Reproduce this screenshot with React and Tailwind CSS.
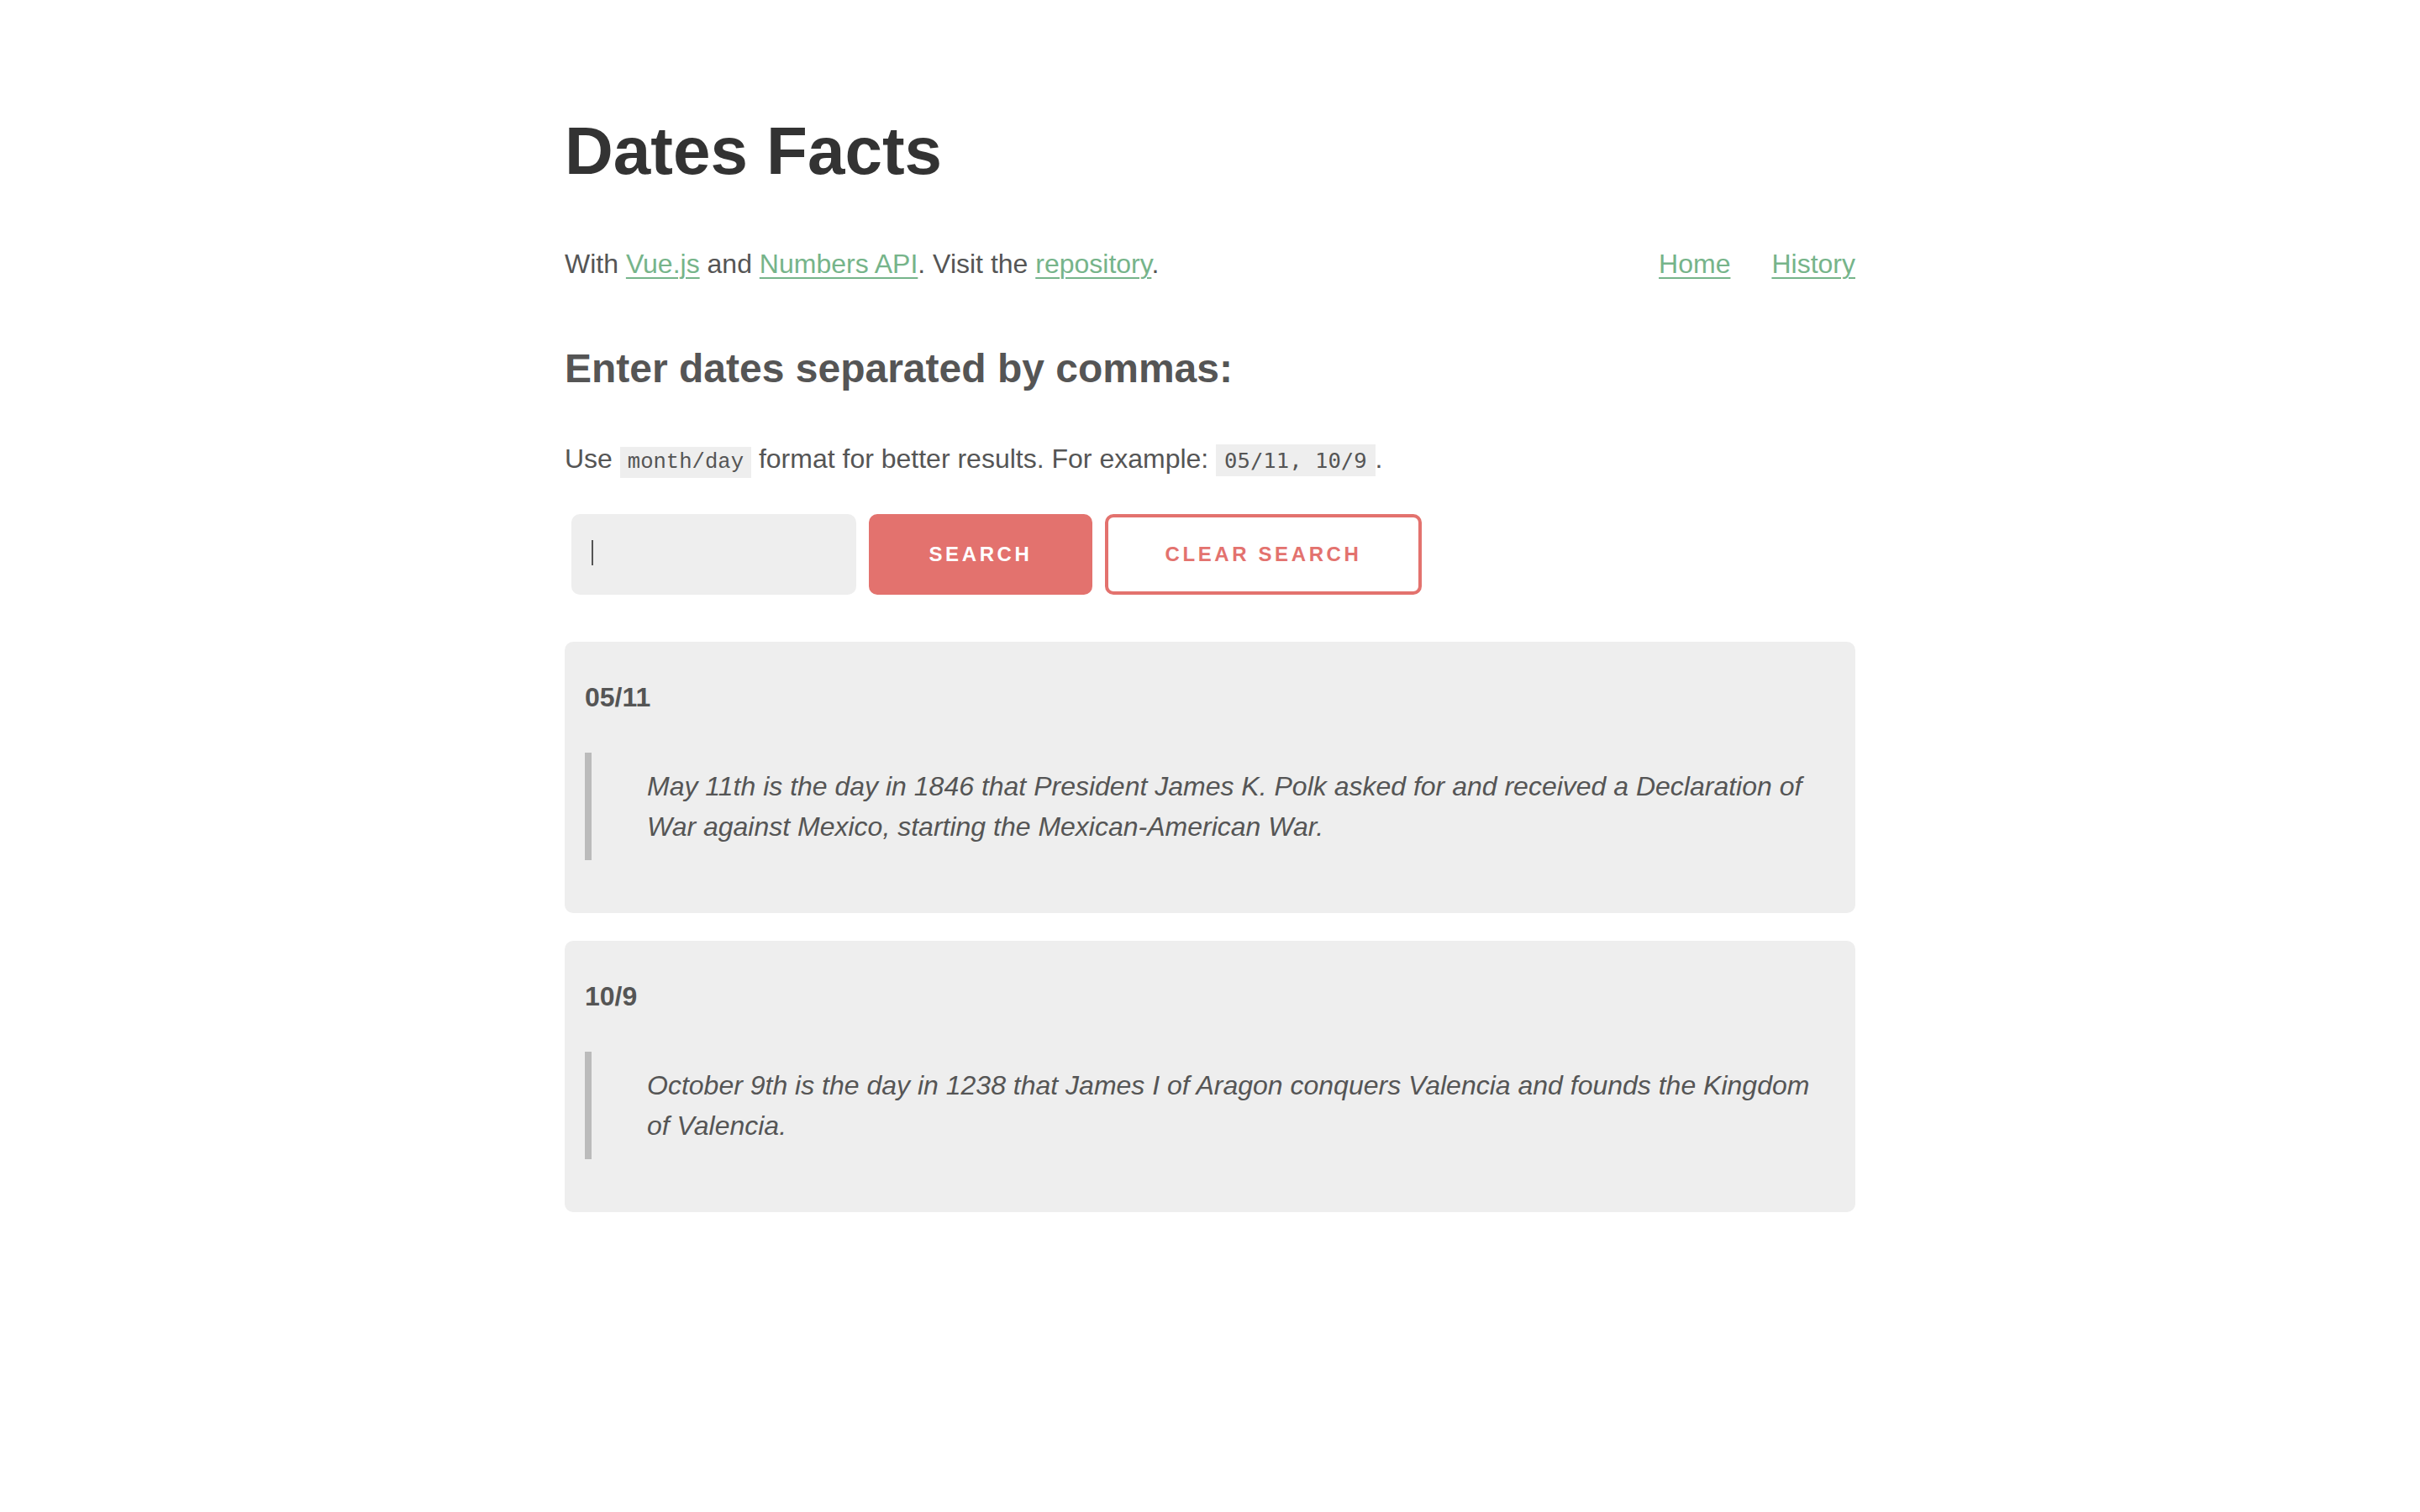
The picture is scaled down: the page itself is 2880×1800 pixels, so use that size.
import React, { useState } from "react";

const facts = [
    {
        date: "05/11",
        text: "May 11th is the day in 1846 that President James K. Polk asked for and received a Declaration of War against Mexico, starting the Mexican-American War.",
    },
    {
        date: "10/9",
        text: "October 9th is the day in 1238 that James I of Aragon conquers Valencia and founds the Kingdom of Valencia.",
    },
];

function Link({ children }) {
    return (
        <a href="#" className="text-[#76b48a] underline decoration-[2px] underline-offset-[5px]">
            {children}
        </a>
    );
}

function FactCard({ date, text }) {
    return (
        <div className="rounded-[10px] bg-[#eeeeee] px-6 pt-[42px] pb-[63px]">
            <h4 className="text-[32px] leading-[48px] font-bold text-[#555]">{date}</h4>
            <blockquote className="mt-[42px] border-l-8 border-[#bbbbbb] py-4 pl-[66px] text-[32px] leading-[48px] italic text-[#555]">
                {text}
            </blockquote>
        </div>
    );
}

export default function App() {
    const [query, setQuery] = useState("");

    return (
        <div className="min-h-screen bg-white font-['Liberation_Sans',Arial,sans-serif] text-[#555]">
            <div className="mx-auto w-[1536px] pt-[132px] pb-[200px]">
                <h1 className="text-[80px] leading-[96px] font-bold text-[#333]">Dates Facts</h1>

                <div className="mt-[62px] flex items-start justify-between text-[32px] leading-[48px]">
                    <p>
                        With <Link>Vue.js</Link> and <Link>Numbers API</Link>. Visit the <Link>repository</Link>.
                    </p>
                    <nav className="flex gap-[49px]">
                        <Link>Home</Link>
                        <Link>History</Link>
                    </nav>
                </div>

                <h2 className="mt-[72px] text-[48px] leading-[58px] font-bold text-[#555]">
                    Enter dates separated by commas:
                </h2>

                <p className="mt-[54px] text-[32px] leading-[48px]">
                    Use{" "}
                    <code className="bg-[#eeeeee] px-[9px] py-[4px] font-['Liberation_Mono','Courier_New',monospace] text-[25.6px]">
                        month/day
                    </code>{" "}
                    format for better results. For example:{" "}
                    <code className="bg-[#eeeeee] px-[10px] py-[4px] font-['DejaVu_Sans_Mono',monospace] text-[25.6px]">
                        05/11, 10/9
                    </code>
                    .
                </p>

                <form className="mt-[37px] flex gap-[15px] pl-2" onSubmit={e => e.preventDefault()}>
                    <div className="relative">
                        <input
                            type="text"
                            value={query}
                            onChange={e => setQuery(e.target.value)}
                            className="h-[96px] w-[339px] rounded-[10px] bg-[#eeeeee] px-6 text-[32px] text-[#555] outline-none"
                        />
                        <span className="pointer-events-none absolute left-[24px] top-[31px] h-[30px] w-[2px] bg-[#555]" />
                    </div>
                    <button className="h-[96px] w-[266px] rounded-[10px] bg-[#e3726e] text-[24px] font-bold tracking-[0.15em] text-white">
                        SEARCH
                    </button>
                    <button type="button" className="h-[96px] w-[377px] rounded-[10px] border-4 border-[#e3726e] bg-white text-[24px] font-bold tracking-[0.15em] text-[#e3726e]">
                        CLEAR SEARCH
                    </button>
                </form>

                <div className="mt-[56px] flex flex-col gap-[33px]">
                    {facts.map(f => (
                        <FactCard key={f.date} date={f.date} text={f.text} />
                    ))}
                </div>
            </div>
        </div>
    );
}
